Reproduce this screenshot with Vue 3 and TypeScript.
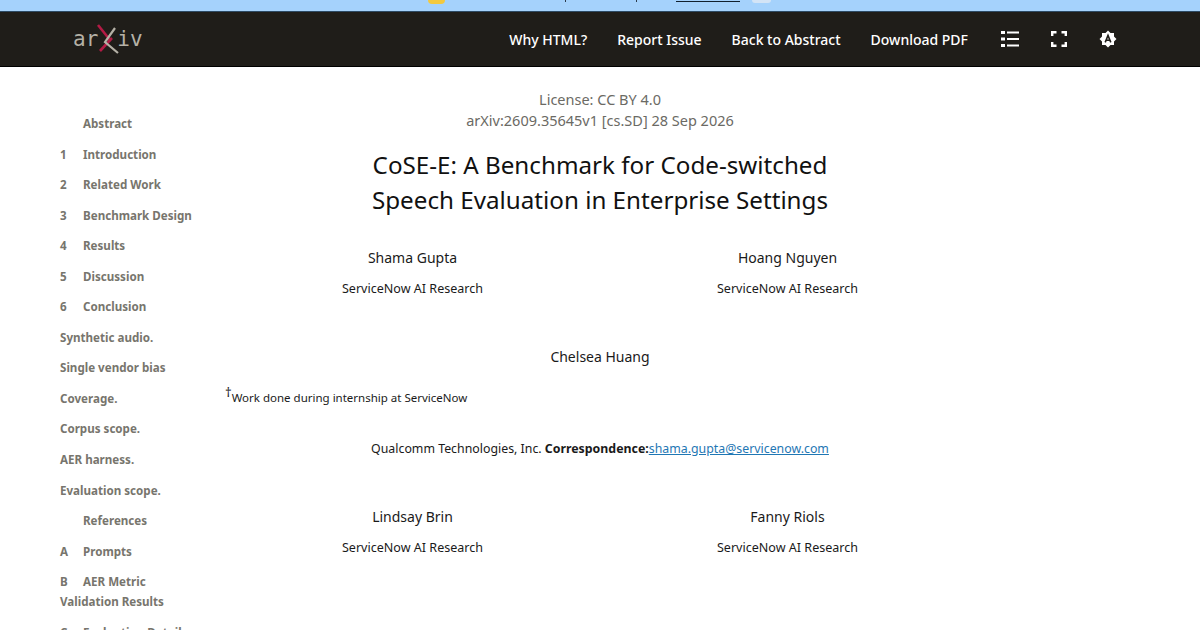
<script setup lang="ts">
const toc = [
  { n: '', t: 'Abstract' },
  { n: '1', t: 'Introduction' },
  { n: '2', t: 'Related Work' },
  { n: '3', t: 'Benchmark Design' },
  { n: '4', t: 'Results' },
  { n: '5', t: 'Discussion' },
  { n: '6', t: 'Conclusion' },
]
const plain = ['Synthetic audio.', 'Single vendor bias', 'Coverage.', 'Corpus scope.', 'AER harness.', 'Evaluation scope.']
const navLinks = ['Why HTML?', 'Report Issue', 'Back to Abstract', 'Download PDF']
</script>

<template>
  <div class="page">
    <div class="banner">
      <span class="emoji"></span>
      <span class="tick t1"></span>
      <span class="tick t2"></span>
      <span class="banner-link"></span>
      <span class="banner-btn"></span>
    </div>
    <header class="nav">
      <a class="logo">
        <span>ar</span>
        <svg class="logo-x" width="24" height="32" viewBox="0 0 24 32" fill="none" stroke-width="2.6">
          <path d="M2 2 L14 17" stroke="#b31b45" />
          <path d="M4 28 L16 15" stroke="#b31b45" />
          <path d="M19 5 L9 19 L22 30" stroke="#b5b1a6" stroke-width="2.2" />
        </svg>
        <span class="iv">iv</span>
      </a>
      <nav class="links">
        <a v-for="l in navLinks" :key="l">{{ l }}</a>
        <svg class="ico first-ico" width="20" height="18" viewBox="0 0 20 18" fill="#fff">
          <rect x="1" y="1" width="4" height="3" /><rect x="7" y="1.5" width="12" height="2" />
          <rect x="1" y="7.5" width="4" height="3" /><rect x="7" y="8" width="12" height="2" />
          <rect x="1" y="14" width="4" height="3" /><rect x="7" y="14.5" width="12" height="2" />
        </svg>
        <svg class="ico" width="18" height="18" viewBox="0 0 18 18" fill="none" stroke="#fff" stroke-width="2.4">
          <path d="M2.2 6V2.2H6.5M11.5 2.2H15.8V6M15.8 12V15.8H11.5M6.5 15.8H2.2V12" />
        </svg>
        <svg class="ico" width="20" height="18" viewBox="-1 0 20 18">
          <path fill="#fff" d="M9 0.5 L11.5 3 L15 3 L15 6.5 L17.5 9 L15 11.5 L15 15 L11.5 15 L9 17.5 L6.5 15 L3 15 L3 11.5 L0.5 9 L3 6.5 L3 3 L6.5 3 Z" />
          <path fill="none" stroke="#1f1d19" stroke-width="1.6" d="M6.2 12.4 L9 5.4 L11.8 12.4 M7.2 10.2 H10.8" />
        </svg>
      </nav>
    </header>

    <div class="body">
      <aside class="toc">
        <div v-for="item in toc" :key="item.t" class="row">
          <span class="num">{{ item.n }}</span>{{ item.t }}
        </div>
        <div v-for="p in plain" :key="p" class="row">{{ p }}</div>
        <div class="row"><span class="num"></span>References</div>
        <div class="row"><span class="num">A</span>Prompts</div>
        <div class="row"><span class="num">B</span>AER Metric<br />Validation Results</div>
        <div class="row"><span class="num">C</span>Evaluation Details</div>
      </aside>

      <main class="paper">
        <div class="license">License: CC BY 4.0<br />arXiv:2609.35645v1 [cs.SD] 28 Sep 2026</div>
        <h1>CoSE-E: A Benchmark for Code-switched<br />Speech Evaluation in Enterprise Settings</h1>

        <div class="authors first">
          <div class="author"><div class="name">Shama Gupta</div><div class="org">ServiceNow AI Research</div></div>
          <div class="author"><div class="name">Hoang Nguyen</div><div class="org">ServiceNow AI Research</div></div>
        </div>

        <div class="name solo">Chelsea Huang</div>
        <div class="note"><sup>†</sup>Work done during internship at ServiceNow</div>
        <div class="corr">Qualcomm Technologies, Inc. <b>Correspondence:</b><a>shama.gupta@servicenow.com</a></div>

        <div class="authors second">
          <div class="author"><div class="name">Lindsay Brin</div><div class="org">ServiceNow AI Research</div></div>
          <div class="author"><div class="name">Fanny Riols</div><div class="org">ServiceNow AI Research</div></div>
        </div>
      </main>
    </div>
  </div>
</template>

<style>
html, body { margin: 0; background: #fff; }
</style>

<style scoped>
.page { width: 1200px; height: 630px; overflow: hidden; font-family: "Noto Sans", sans-serif; color: #1a1a1a; background: #fff; }

.banner { position: relative; height: 11px; background: #a5d2fc; overflow: hidden; }
.banner span { position: absolute; top: 0; }
.emoji { left: 428px; width: 17px; height: 4px; background: #f3c93f; border-radius: 0 0 8px 8px; }
.tick { width: 1px; height: 2px; background: #2b3a4a; }
.t1 { left: 565px; }
.t2 { left: 636px; }
.banner-link { left: 676px; width: 64px; height: 1px; top: 1px !important; background: #10202f; }
.banner-btn { left: 752px; width: 19px; height: 3px; background: #d3e4f6; border-radius: 0 0 3px 3px; }

.nav { height: 56px; box-sizing: border-box; background: #1f1d19; border-top: 1px solid #2d4a63; border-bottom: 1px solid #000; display: flex; align-items: center; justify-content: space-between; padding: 0 82px 0 73px; }
.logo { display: flex; align-items: center; font-family: "DejaVu Sans Mono", monospace; font-size: 21px; color: #b5b1a6; }
.logo-x { margin-left: -2px; }
.iv { margin-left: -3px; }
.links { display: flex; align-items: center; gap: 30px; font-size: 14px; font-weight: 500; color: #fff; }
.first-ico { margin-left: 2px; }

.body { display: grid; grid-template-columns: 225px 750px; }
.toc { padding: 47px 0 0 60px; font-size: 11.6px; font-weight: 700; line-height: 20px; color: #77756d; }
.row { margin-bottom: 10.55px; width: 140px; white-space: nowrap; }
.num { display: inline-block; width: 23px; }

.paper { text-align: center; }
.license { margin-top: 22px; font-size: 14.5px; line-height: 21px; color: #6b6a64; }
h1 { margin: 16px 0 0; font-size: 24.2px; font-weight: 400; line-height: 35px; color: #111; }
.authors { display: grid; grid-template-columns: 375px 375px; }
.first { margin-top: 29px; }
.second { margin-top: 47px; }
.name { font-size: 14px; line-height: 24px; }
.org { margin-top: 10px; font-size: 12.55px; line-height: 18px; }
.solo { margin-top: 47px; }
.note { margin-top: 20px; text-align: left; font-size: 11.5px; line-height: 18px; }
.note sup { font-size: 13px; line-height: 0; }
.corr { margin-top: 33px; font-size: 12.35px; line-height: 18px; }
.corr a { color: #1f77b4; text-decoration: underline; }
</style>
